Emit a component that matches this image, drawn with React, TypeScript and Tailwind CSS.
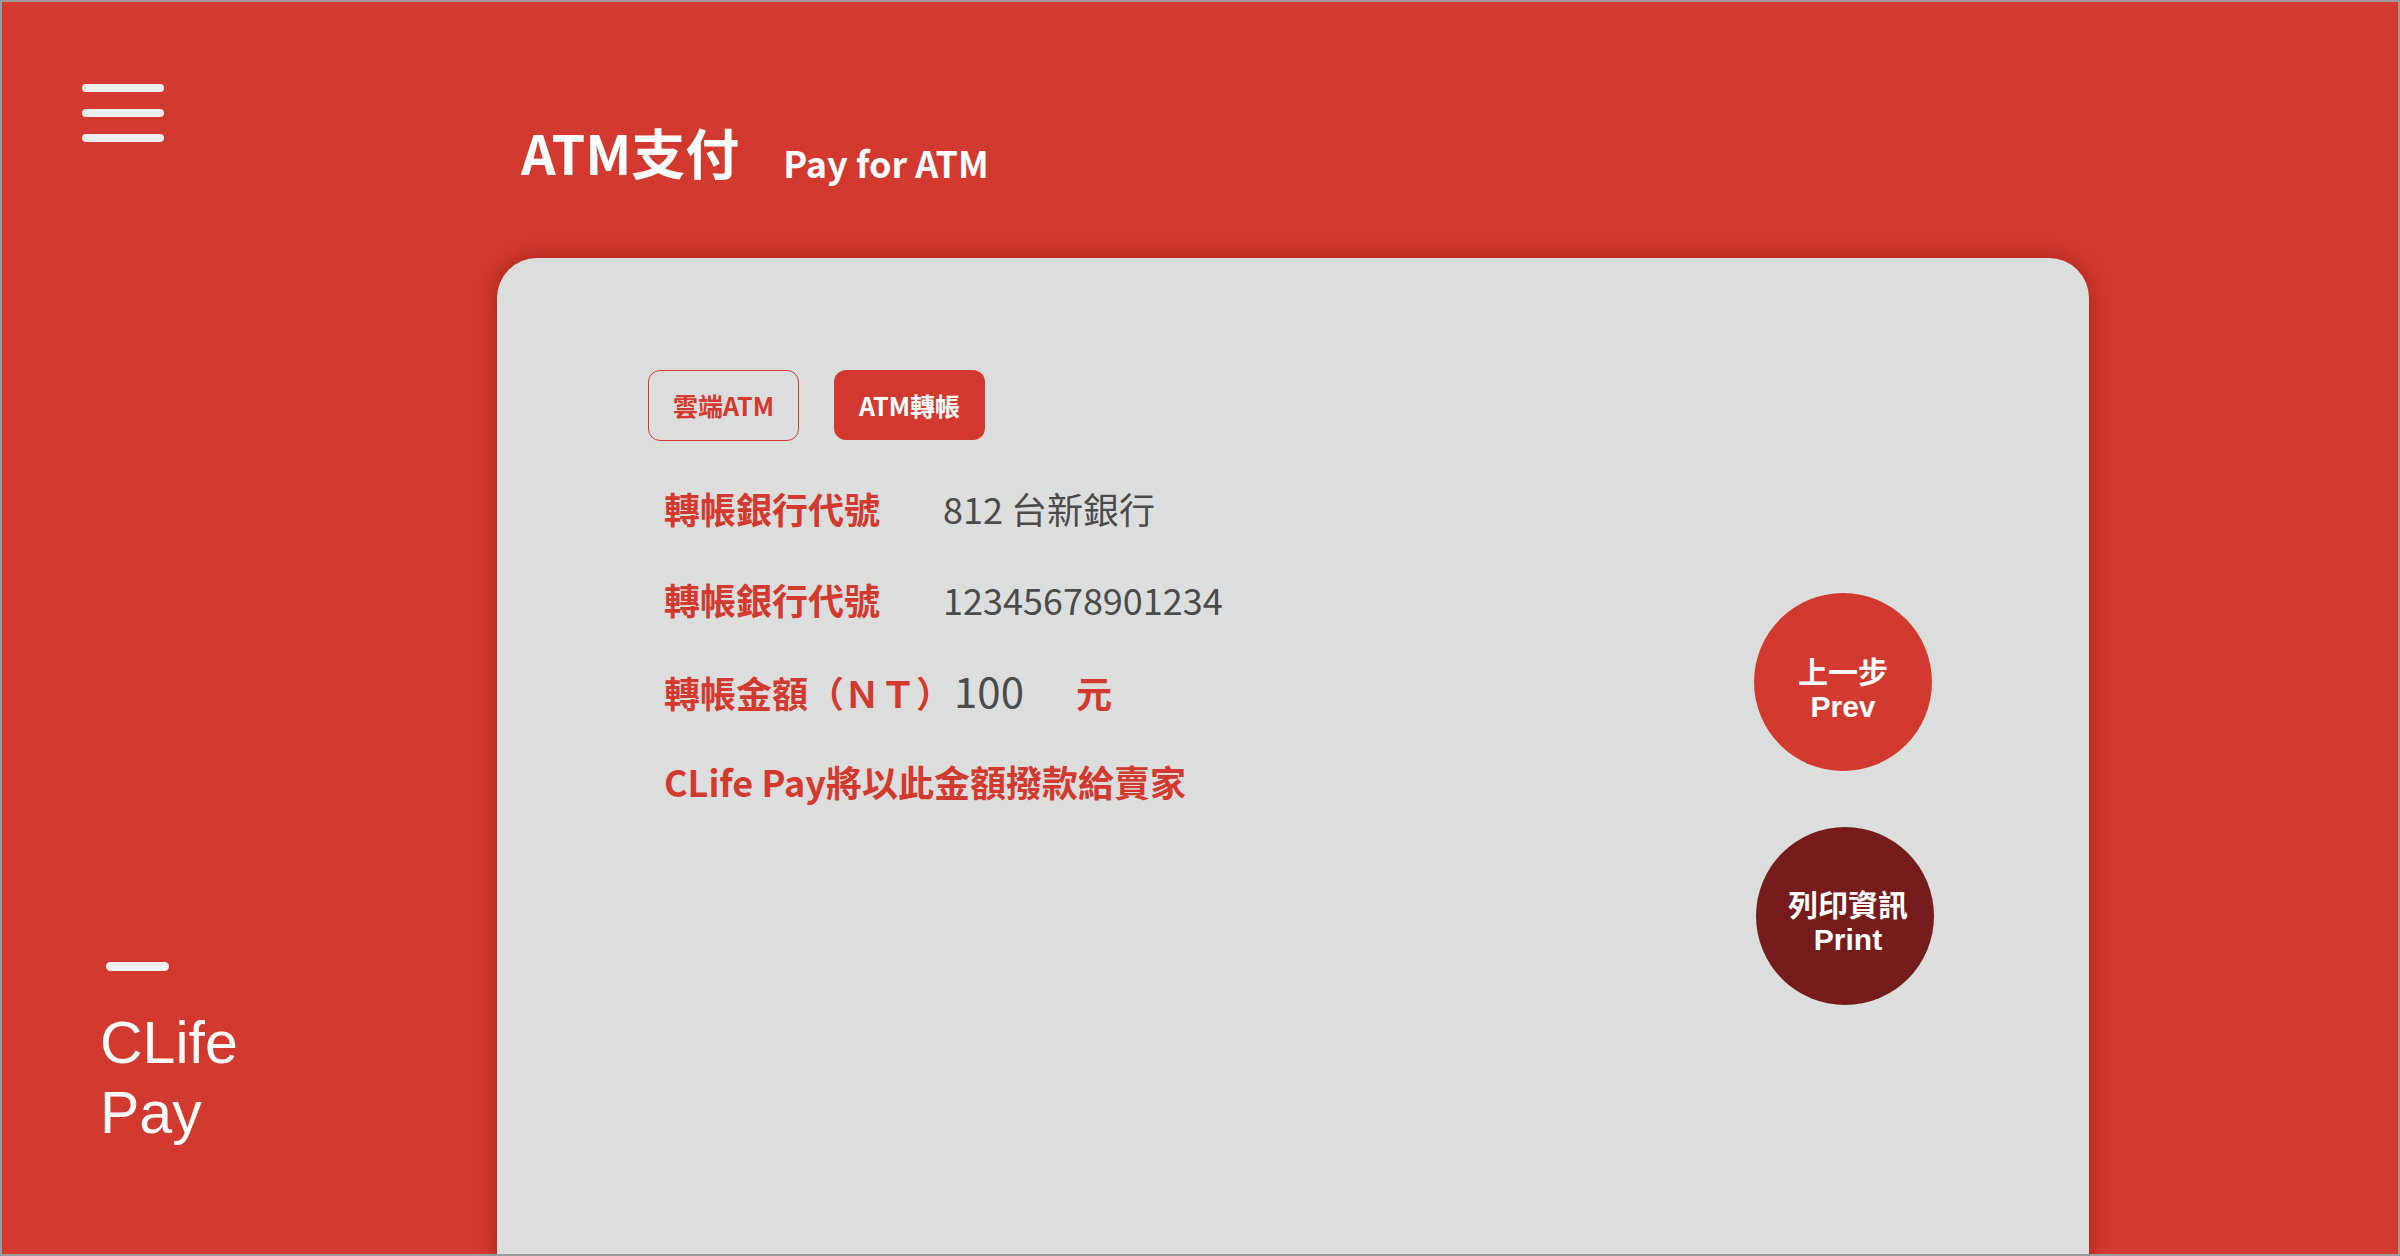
export default function App() {
  const cjk = "font-['Noto_Sans_CJK_TC','Noto_Sans_CJK_SC',sans-serif]";
  return (
    <div className="w-[2400px] h-[1256px] border-2 border-[#9b9b9b] bg-[#d33a2f] flex overflow-hidden">
      <aside className="w-[495px] shrink-0 flex flex-col justify-between pt-[82px] pl-[80px] pb-[106px]">
        <div className="flex flex-col gap-[17px]">
          <span className="block w-[82px] h-[8px] rounded-full bg-[#eeeeee]" />
          <span className="block w-[82px] h-[8px] rounded-full bg-[#eeeeee]" />
          <span className="block w-[82px] h-[8px] rounded-full bg-[#eeeeee]" />
        </div>
        <div className="flex flex-col pl-[18px]">
          <span className="block ml-[6px] w-[63px] h-[9px] rounded-full bg-[#f2f2f2]" />
          <div className="mt-[37px] text-[59px] leading-[70px] text-[#fbfbfb] font-['Liberation_Sans',Arial,sans-serif]">
            <div>CLife</div>
            <div>Pay</div>
          </div>
        </div>
      </aside>

      <main className="flex-1 min-w-0 flex flex-col">
        <header className={`h-[256px] shrink-0 pt-[123px] pl-[24px] flex items-baseline gap-[44px] text-white font-bold ${cjk}`}>
          <h1 className="text-[54px] leading-[54px]">ATM支付</h1>
          <span className="relative top-[3px] text-[36px] leading-[36px]">Pay for ATM</span>
        </header>

        <section className={`w-[1592px] flex-1 rounded-t-[40px] bg-[#dcdedd] shadow-[0_0_18px_4px_rgba(140,20,10,0.45)] flex pl-[151px] pr-[154px] pt-[112px] ${cjk}`}>
          <div className="flex-1 flex flex-col">
            <div className="flex gap-[35px]">
              <button className="w-[151px] h-[71px] rounded-[12px] border border-[#d33a2f] text-[#d33a2f] text-[25px] font-bold leading-none flex items-center justify-center">
                雲端ATM
              </button>
              <button className="w-[151px] h-[70px] rounded-[12px] bg-[#d33a2f] text-white text-[25px] font-bold leading-none flex items-center justify-center">
                ATM轉帳
              </button>
            </div>

            <div className="mt-[40px] pl-[16px] flex flex-col gap-[37px]">
              <div className="h-[54px] flex items-baseline leading-[54px]">
                <span className="text-[36px] font-bold text-[#d33a2f]">轉帳銀行代號</span>
                <span className="ml-[63px] text-[36px] text-[#4b4b4b]">812 台新銀行</span>
              </div>
              <div className="h-[54px] flex items-baseline leading-[54px]">
                <span className="text-[36px] font-bold text-[#d33a2f]">轉帳銀行代號</span>
                <span className="ml-[63px] text-[36px] text-[#4b4b4b]">12345678901234</span>
              </div>
              <div className="h-[54px] flex items-baseline leading-[54px]">
                <span className="text-[36px] font-bold text-[#d33a2f]">轉帳金額（ＮＴ）</span>
                <span className="ml-[2px] text-[42px] text-[#4b4b4b]">100</span>
                <span className="ml-[52px] text-[36px] font-bold text-[#d33a2f]">元</span>
              </div>
              <div className="h-[54px] flex items-baseline leading-[54px]">
                <span className="text-[36px] font-bold text-[#d33a2f]">CLife Pay將以此金額撥款給賣家</span>
              </div>
            </div>
          </div>

          <div className="w-[181px] flex flex-col gap-[56px] pt-[223px] font-['Liberation_Sans','Noto_Sans_CJK_TC',sans-serif]">
            <button className="w-[178px] h-[178px] pt-[16px] rounded-full bg-[#d33a2f] text-white font-bold text-[30px] leading-[34px] flex flex-col items-center justify-center">
              <span>上一步</span>
              <span>Prev</span>
            </button>
            <button className="ml-[2px] w-[178px] h-[178px] pt-[14px] pl-[6px] rounded-full bg-[#761c1c] text-white font-bold text-[30px] leading-[34px] flex flex-col items-center justify-center">
              <span>列印資訊</span>
              <span>Print</span>
            </button>
          </div>
        </section>
      </main>
    </div>
  );
}
